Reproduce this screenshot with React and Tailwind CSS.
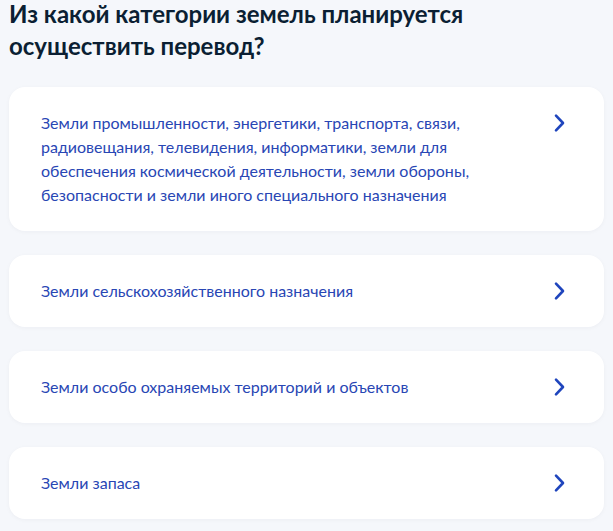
import React from "react";

const items = [
  "Земли промышленности, энергетики, транспорта, связи, радиовещания, телевидения, информатики, земли для обеспечения космической деятельности, земли обороны, безопасности и земли иного специального назначения",
  "Земли сельскохозяйственного назначения",
  "Земли особо охраняемых территорий и объектов",
  "Земли запаса",
];

function Chevron() {
  return (
    <svg width="24" height="24" viewBox="0 0 24 24" fill="none" className="shrink-0">
      <path d="M8 4.6 L15 12 L8 19.4" stroke="#1f45bd" strokeWidth="2.6" strokeLinecap="round" strokeLinejoin="round" />
    </svg>
  );
}

export default function App() {
  return (
    <div className="min-h-[531px] bg-[#f5f7fb] px-[9px] pb-6" style={{ fontFamily: "Lato, 'Noto Sans', sans-serif" }}>
      <h1 className="-mt-[2px] pt-0 text-[24px] leading-[32px] font-bold text-[#0b1f33] w-[520px]">
        Из какой категории земель планируется осуществить перевод?
      </h1>
      <div className="mt-[25px] flex flex-col gap-6">
        {items.map((t, i) => (
          <div key={i} className="flex items-start justify-between gap-6 rounded-2xl bg-white py-6 pl-8 pr-8 shadow-[0_1px_4px_rgba(0,0,40,0.04)]">
            <div className="max-w-[440px] text-[16px] leading-6 text-[#2846b4]">{t}</div>
            <Chevron />
          </div>
        ))}
      </div>
    </div>
  );
}
